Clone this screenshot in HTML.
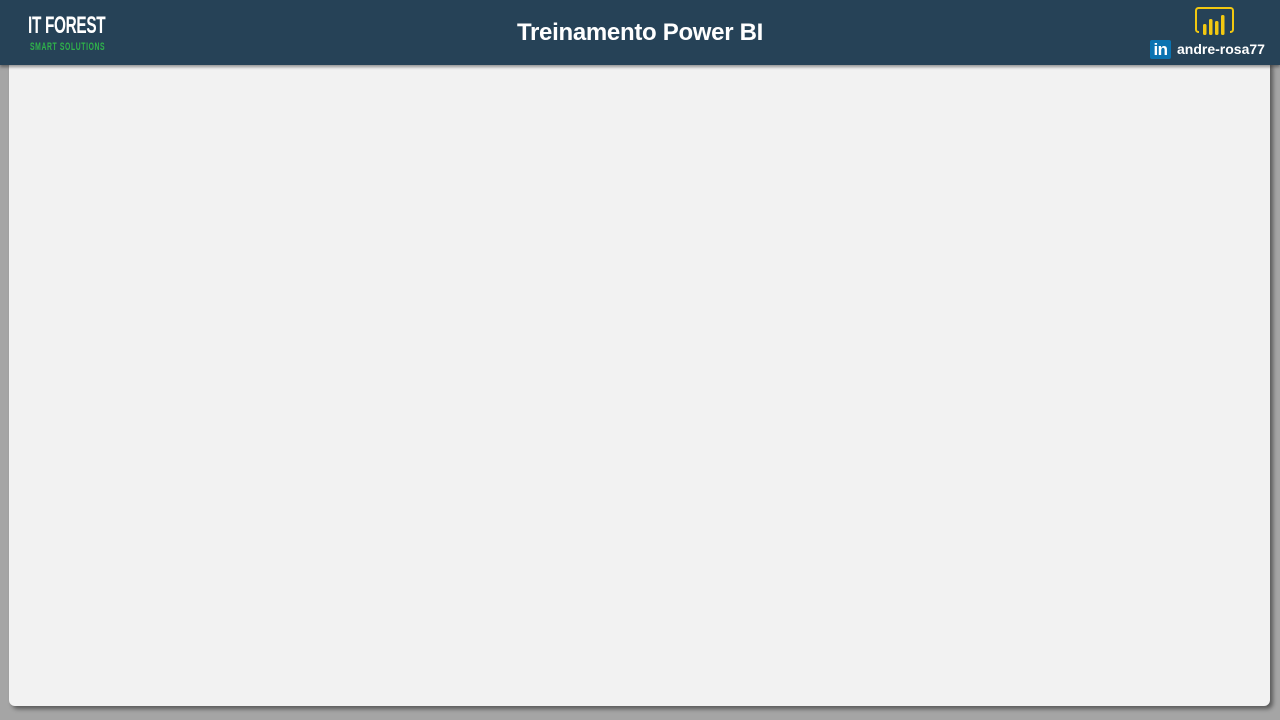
<!DOCTYPE html>
<html><head><style>
html,body{margin:0;padding:0;width:1280px;height:720px;overflow:hidden;background:#a5a5a5;font-family:"Liberation Sans",sans-serif}
.panel{position:absolute;left:9px;top:60px;width:1261px;height:646px;background:#f2f2f2;border-radius:6px;box-shadow:3px 3px 4px rgba(0,0,0,.45)}
.hdr{position:absolute;left:0;top:0;width:1280px;height:65px;background:#264257;box-shadow:0 2px 3px rgba(0,0,0,.4)}
.t{position:absolute;left:0;width:1280px;top:19px;text-align:center;color:#fff;font-weight:bold;font-size:24px;letter-spacing:-0.3px}
.logo{position:absolute;left:28px;top:13px;color:#fff;font-weight:bold;font-size:24px;transform:scaleX(0.64);transform-origin:left;letter-spacing:-0.5px;line-height:26px}
.sub{position:absolute;left:30px;top:41px;color:#2fb34a;font-size:11px;font-weight:bold;transform:scaleX(0.62);transform-origin:left;letter-spacing:1px}
.li{position:absolute;left:1150px;top:40px;width:21px;height:19px;background:#0a73b1;border-radius:2px;color:#fff;font-weight:bold;font-size:17px;line-height:20px;text-align:center;letter-spacing:-0.5px}
.u{position:absolute;left:1177px;top:41px;color:#fff;font-weight:bold;font-size:14px}
</style></head><body>
<div class="panel"></div>
<div class="hdr">
<div class="logo">IT FOREST</div>
<div class="sub">SMART SOLUTIONS</div>
<div class="t">Treinamento Power BI</div>
<svg style="position:absolute;left:1195px;top:7px" width="40" height="30" viewBox="0 0 40 30">
<path d="M4 25 H3.5 A2.5 2.5 0 0 1 1 22.5 V3.5 A2.5 2.5 0 0 1 3.5 1 H35.5 A2.5 2.5 0 0 1 38 3.5 V22.5 A2.5 2.5 0 0 1 35.5 25 H35" fill="none" stroke="#f2c811" stroke-width="2"/>
<rect x="8" y="17" width="3.5" height="11" rx="1.5" fill="#f2c811"/>
<rect x="14" y="12" width="3.5" height="16" rx="1.5" fill="#f2c811"/>
<rect x="20" y="14" width="3.5" height="14" rx="1.5" fill="#f2c811"/>
<rect x="26" y="8" width="3.5" height="20" rx="1.5" fill="#f2c811"/>
</svg>
<div class="li">in</div>
<div class="u">andre-rosa77</div>
</div>
</body></html>
